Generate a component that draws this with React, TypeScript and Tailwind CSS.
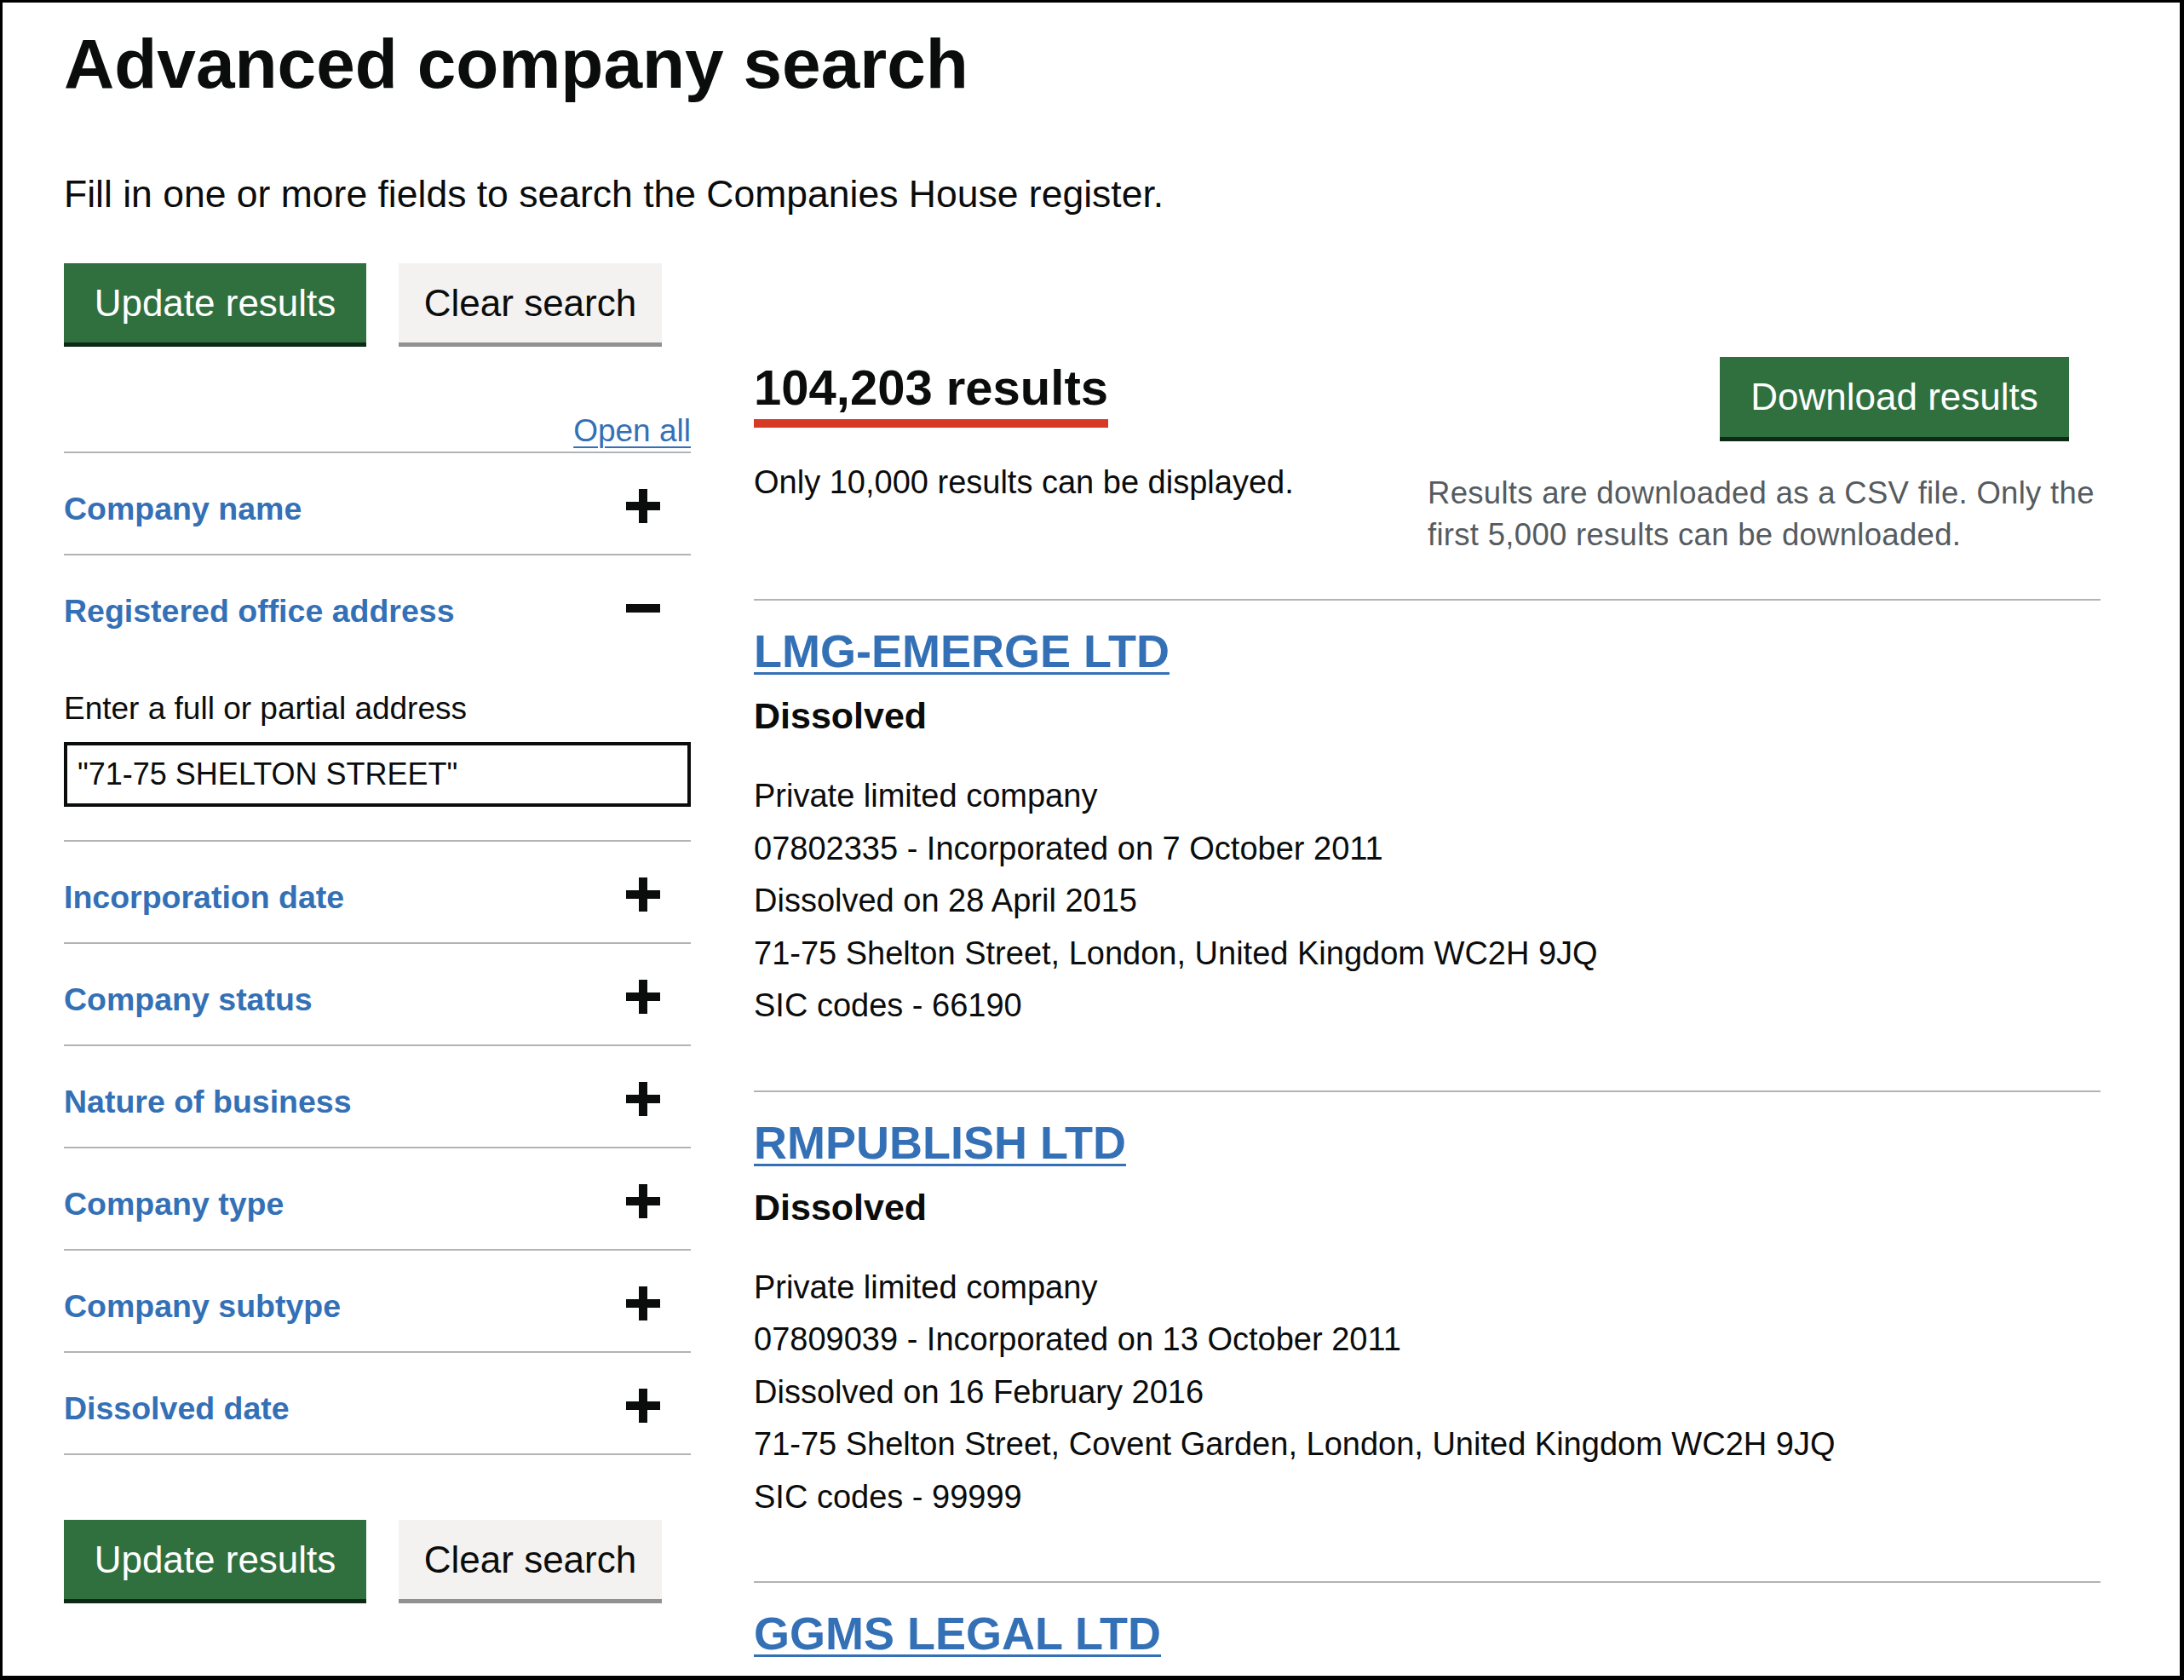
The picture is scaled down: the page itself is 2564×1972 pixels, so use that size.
import { Fragment } from 'react';

const filters = [
    { label: 'Company name', open: false },
    { label: 'Registered office address', open: true },
    { label: 'Incorporation date', open: false },
    { label: 'Company status', open: false },
    { label: 'Nature of business', open: false },
    { label: 'Company type', open: false },
    { label: 'Company subtype', open: false },
    { label: 'Dissolved date', open: false },
];

const results = [
    {
        name: 'LMG-EMERGE LTD',
        status: 'Dissolved',
        lines: [
            'Private limited company',
            '07802335 - Incorporated on 7 October 2011',
            'Dissolved on 28 April 2015',
            '71-75 Shelton Street, London, United Kingdom WC2H 9JQ',
            'SIC codes - 66190',
        ],
    },
    {
        name: 'RMPUBLISH LTD',
        status: 'Dissolved',
        lines: [
            'Private limited company',
            '07809039 - Incorporated on 13 October 2011',
            'Dissolved on 16 February 2016',
            '71-75 Shelton Street, Covent Garden, London, United Kingdom WC2H 9JQ',
            'SIC codes - 99999',
        ],
    },
    {
        name: 'GGMS LEGAL LTD',
        status: '',
        lines: [],
    },
];

function PlusIcon() {
    return (
        <svg width="40" height="40" viewBox="0 0 40 40" className="shrink-0">
            <rect x="0" y="15" width="40" height="10" fill="#0b0c0c" />
            <rect x="15" y="0" width="10" height="40" fill="#0b0c0c" />
        </svg>
    );
}

function MinusIcon() {
    return (
        <svg width="40" height="40" viewBox="0 0 40 40" className="shrink-0">
            <rect x="0" y="15" width="40" height="10" fill="#0b0c0c" />
        </svg>
    );
}

function ButtonRow() {
    return (
        <div className="flex gap-[38px]">
            <button className="flex h-[93px] w-[355px] items-center justify-center bg-[#30703f] text-[44px] text-white shadow-[0_5px_0_#0e2a17]">
                Update results
            </button>
            <button className="flex h-[93px] w-[309px] items-center justify-center bg-[#f3f2f1] text-[44px] text-[#0b0c0c] shadow-[0_5px_0_#929191]">
                Clear search
            </button>
        </div>
    );
}

export default function App() {
    return (
        <div className="h-[1972px] w-[2564px] overflow-hidden border-t-[3px] border-r-[5px] border-b-[5px] border-l-[3px] border-black bg-white font-['Liberation_Sans',Arial,sans-serif] text-[#0b0c0c]">
            <div className="pl-[72px] pr-[93px]">
                <h1 className="mt-[31px] text-[82px] leading-[82px] font-bold">Advanced company search</h1>
                <p className="mt-[81px] text-[44.5px] leading-[62px]">
                    Fill in one or more fields to search the Companies House register.
                </p>
                <div className="mt-[50px]">
                    <ButtonRow />
                </div>

                <div className="mt-[17px] flex gap-[74px]">
                    {/* filters */}
                    <div className="w-[736px] shrink-0">
                        <div className="border-b-2 border-[#b1b4b6] pt-[64px] pb-[1px] text-right">
                            <a href="#" className="text-[37px] leading-[46px] text-[#3470b6] underline decoration-[2px] underline-offset-[6px]">
                                Open all
                            </a>
                        </div>
                        {filters.map((f) => (
                            <div key={f.label} className="border-b-2 border-[#b1b4b6]">
                                <div className="flex items-start justify-between pt-[42px] pb-[30px] pr-[36px]">
                                    <span className="text-[37.5px] leading-[46px] font-bold text-[#3470b6]">{f.label}</span>
                                    {f.open ? <MinusIcon /> : <PlusIcon />}
                                </div>
                                {f.open && (
                                    <div className="pb-[39px]">
                                        <label className="mt-[39px] block text-[37px] leading-[46px]">
                                            Enter a full or partial address
                                        </label>
                                        <input
                                            readOnly
                                            value={'"71-75 SHELTON STREET"'}
                                            className="mt-[16px] block h-[76px] w-full border-[4px] border-[#0b0c0c] px-[12px] text-[36px] text-[#0b0c0c] outline-none"
                                        />
                                    </div>
                                )}
                            </div>
                        ))}
                        <div className="mt-[76px]">
                            <ButtonRow />
                        </div>
                    </div>

                    {/* results */}
                    <div className="min-w-0 flex-1">
                        <div className="flex">
                            <div className="flex-1">
                                <h2 className="mt-[7px] inline-block border-b-[10px] border-[#d63a26] pb-[8px] text-[58px] leading-[58px] font-bold">
                                    104,203 results
                                </h2>
                                <p className="mt-[34px] text-[38px] leading-[61px]">Only 10,000 results can be displayed.</p>
                            </div>
                            <div className="flex w-[790px] flex-col">
                                <button className="mr-[37px] flex h-[94px] w-[410px] items-center justify-center self-end bg-[#30703f] text-[44px] text-white shadow-[0_5px_0_#0e2a17]">
                                    Download results
                                </button>
                                <p className="mt-[41px] text-[36.5px] leading-[49px] tracking-[0.3px] text-[#555b5f]">
                                    Results are downloaded as a CSV file. Only the first 5,000 results can be downloaded.
                                </p>
                            </div>
                        </div>

                        <div className="mt-[51px]">
                            {results.map((r) => (
                                <div key={r.name} className="border-t-2 border-[#b1b4b6] pt-[27px] pb-[68px]">
                                    <a href="#" className="block text-[54px] leading-[65px] font-bold text-[#3470b6]">
                                        <span className="underline decoration-[3px] underline-offset-[6px]">{r.name}</span>
                                    </a>
                                    {r.status && (
                                        <div className="mt-[17px] text-[43px] leading-[52px] font-bold">{r.status}</div>
                                    )}
                                    <div className="mt-[38px]">
                                        {r.lines.map((line) => (
                                            <Fragment key={line}>
                                                <p className="text-[38px] leading-[61.5px]">{line}</p>
                                            </Fragment>
                                        ))}
                                    </div>
                                </div>
                            ))}
                        </div>
                    </div>
                </div>
            </div>
        </div>
    );
}
